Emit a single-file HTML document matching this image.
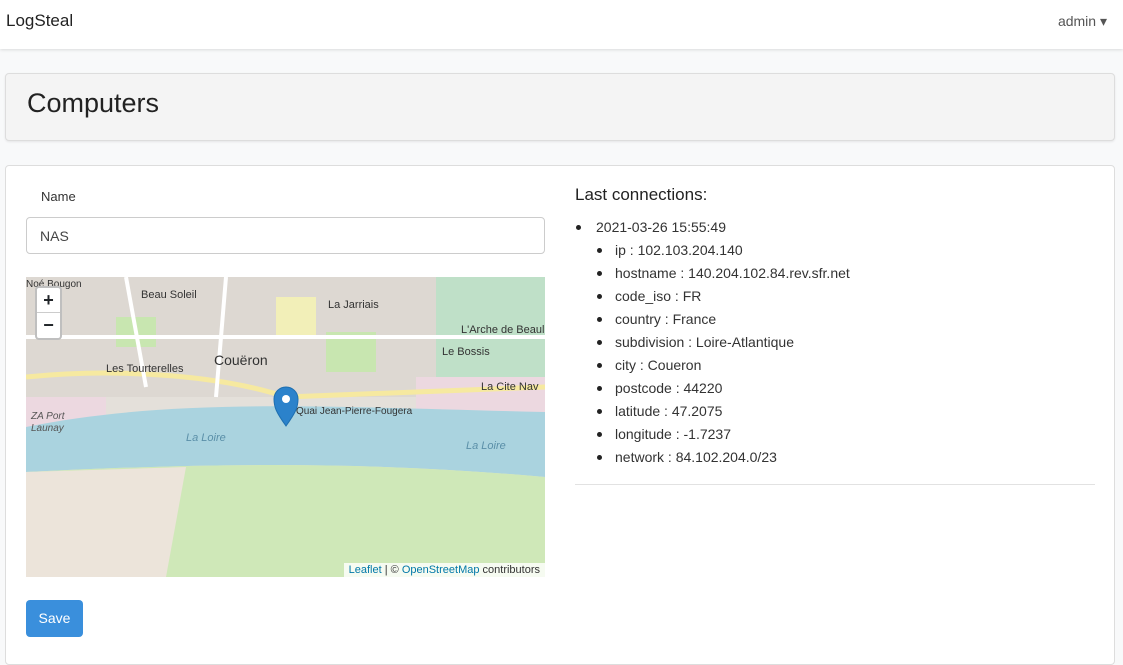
<!DOCTYPE html>
<html><head><meta charset="utf-8"><style>
*{box-sizing:border-box}
body{margin:0;width:1123px;height:649px;overflow:hidden;background:#f8f9fa;font-family:"Liberation Sans",sans-serif;color:#212529}
.nav{position:absolute;left:0;top:0;width:1123px;height:49px;background:#fff;box-shadow:0 1px 3px rgba(0,0,0,.12)}
.brand{position:absolute;left:6px;top:11px;font-size:17px;color:#222}
.admin{position:absolute;right:16px;top:13px;font-size:14px;color:#555}
.hdr{position:absolute;left:5px;top:73px;width:1110px;height:68px;background:#f4f4f4;border:1px solid #ddd;border-radius:4px;box-shadow:0 1px 2px rgba(0,0,0,.08)}
.hdr h1{margin:0;position:absolute;left:21px;top:14px;font-weight:400;font-size:27px;color:#222}
.card{position:absolute;left:5px;top:165px;width:1110px;height:500px;background:#fff;border:1px solid #ddd;border-radius:4px}
.lbl{position:absolute;left:41px;top:189px;font-size:13px;color:#333}
.inp{position:absolute;left:26px;top:217px;width:519px;height:37px;border:1px solid #ccc;border-radius:4px;font-size:14px;color:#444;padding:10px 0 0 13px}
.map{position:absolute;left:26px;top:277px;width:519px;height:300px;overflow:hidden;background:#e6e2dc}
.btn{position:absolute;left:26px;top:600px;width:57px;height:37px;background:#3a8fdc;border-radius:4px;color:#fff;font-size:14px;text-align:center;line-height:37px}
.lc{position:absolute;left:575px;top:185px;font-size:17px;color:#222}
ul{margin:0;padding:0}
.list{position:absolute;left:576px;top:216px;font-size:14px;color:#333;line-height:23px}
.list>li{list-style:none;position:relative;padding-left:20px}
.list li:before{content:"";position:absolute;width:5px;height:5px;border-radius:50%;background:#222;top:9px}
.list>li:before{left:0}
.list ul li{list-style:none;position:relative;padding-left:19px}
.list ul li:before{left:1px}
.hr{position:absolute;left:575px;top:484px;width:520px;height:1px;background:#e2e2e2}
.zoom{position:absolute;left:9px;top:9px;width:27px;height:54px;background:#fff;border:2px solid rgba(0,0,0,.25);border-radius:4px;font-weight:bold;font-size:18px;text-align:center;line-height:24px}
.attr{position:absolute;right:0;bottom:0;background:rgba(255,255,255,.8);font-size:11px;padding:1px 5px;color:#333}
.attr span{color:#0078a8}
</style></head><body>
<div class="nav"><div class="brand">LogSteal</div><div class="admin">admin ▾</div></div>
<div class="hdr"><h1>Computers</h1></div>
<div class="card"></div>
<div class="lbl">Name</div>
<div class="inp">NAS</div>
<div class="map">
<svg width="519" height="300" viewBox="0 0 519 300">
<rect width="519" height="300" fill="#e4e0da"/>
<rect x="0" y="0" width="519" height="120" fill="#ddd8d2"/>
<rect x="90" y="40" width="40" height="30" fill="#c8e6b0"/>
<rect x="250" y="20" width="40" height="40" fill="#f2efb8"/>
<rect x="300" y="55" width="50" height="40" fill="#c8e6b0"/>
<rect x="410" y="0" width="109" height="120" fill="#bfe0c8"/>
<rect x="0" y="120" width="80" height="50" fill="#ecd8e0"/>
<rect x="390" y="100" width="129" height="40" fill="#ecd8e0"/>
<path d="M0 100 C100 90 200 100 260 120 L519 110" stroke="#f6e9a0" stroke-width="5" fill="none"/>
<path d="M0 60 L519 60 M200 0 L190 120 M100 0 L120 110" stroke="#fff" stroke-width="4" fill="none"/>
<path d="M0 150 C150 120 300 130 519 135 L519 200 C350 185 200 185 0 195 Z" fill="#aad3df"/>
<path d="M0 195 C200 185 350 185 519 200 L519 300 L0 300 Z" fill="#cfe8b8"/>
<path d="M0 195 L160 190 L140 300 L0 300 Z" fill="#ece4da"/>
<text x="160" y="164" font-size="11" font-style="italic" fill="#5a8fa8">La Loire</text>
<text x="440" y="172" font-size="11" font-style="italic" fill="#5a8fa8">La Loire</text>
<text x="188" y="88" font-size="14" fill="#333">Couëron</text>
<text x="115" y="21" font-size="11" fill="#333">Beau Soleil</text>
<text x="302" y="31" font-size="11" fill="#333">La Jarriais</text>
<text x="435" y="56" font-size="11" fill="#333">L'Arche de Beaulie</text>
<text x="416" y="78" font-size="11" fill="#333">Le Bossis</text>
<text x="80" y="95" font-size="11" fill="#333">Les Tourterelles</text>
<text x="455" y="113" font-size="11" fill="#333">La Cite Nav</text>
<text x="270" y="137" font-size="10" fill="#333">Quai Jean-Pierre-Fougera</text>
<text x="5" y="142" font-size="10" font-style="italic" fill="#555">ZA Port</text>
<text x="5" y="154" font-size="10" font-style="italic" fill="#555">Launay</text>
<text x="0" y="10" font-size="10" fill="#333">Noé Bougon</text>
<path d="M260 149 C250 135 248 130 248 122 A12 12 0 0 1 272 122 C272 130 270 135 260 149 Z" fill="#2b82cb" stroke="#1e6fb0"/>
<circle cx="260" cy="122" r="4" fill="#fff"/>
</svg>
<div class="zoom">+<div style="border-top:1px solid #ccc">−</div></div>
<div class="attr"><span>Leaflet</span> | © <span>OpenStreetMap</span> contributors</div>
</div>
<div class="btn">Save</div>
<div class="lc">Last connections:</div>
<ul class="list"><li>2021-03-26 15:55:49
<ul><li>ip : 102.103.204.140</li><li>hostname : 140.204.102.84.rev.sfr.net</li><li>code_iso : FR</li><li>country : France</li><li>subdivision : Loire-Atlantique</li><li>city : Coueron</li><li>postcode : 44220</li><li>latitude : 47.2075</li><li>longitude : -1.7237</li><li>network : 84.102.204.0/23</li></ul></li></ul>
<div class="hr"></div>
</body></html>
